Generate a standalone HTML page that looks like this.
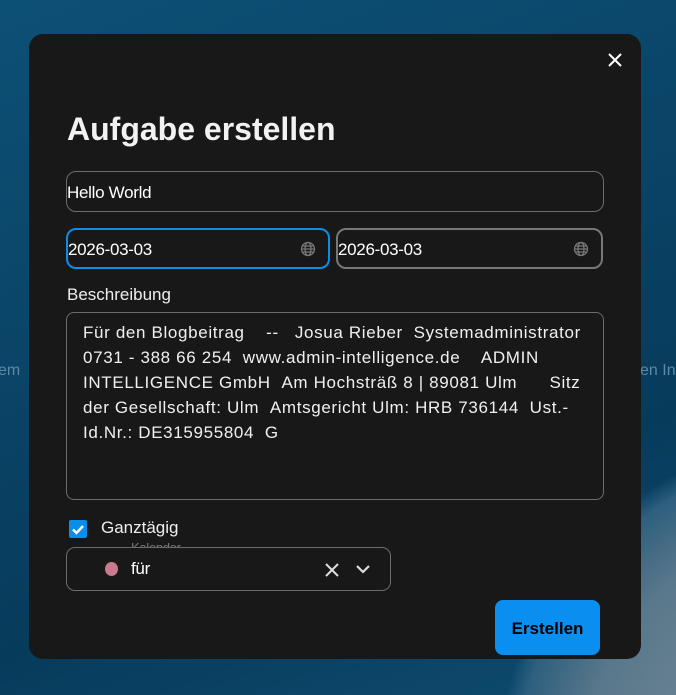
<!DOCTYPE html>
<html><head><meta charset="utf-8"><style>
*{box-sizing:border-box;margin:0;padding:0}
body{width:676px;height:695px;overflow:hidden;position:relative;font-family:"Segoe UI","Liberation Sans",sans-serif;
background:radial-gradient(circle at 820px 760px,#7d909c 0,#5a788b 230px,#2d5f7e 300px,transparent 320px),linear-gradient(160deg,#0d5076 0%,#0a4467 40%,#073b5c 70%,#0e4c6f 100%);}
.bg{position:absolute;top:362px;color:#5d8aa5;font-size:16px}
.dlg{position:absolute;left:29px;top:34px;width:612px;height:625px;background:#181818;border-radius:14px;color:#fff}
.x{position:absolute;left:578px;top:18px}
h1{position:absolute;left:38px;top:77px;font-size:32px;font-weight:bold;color:#f2f2f2}
.in{position:absolute;border:1.5px solid #6c6c6c;border-radius:10px;color:#fff;font-size:17px;padding-left:0px;padding-top:3px;display:flex;align-items:center;letter-spacing:-0.3px}
.glob{position:absolute;right:12px;top:11px}
.lbl{position:absolute;left:38px;top:251px;font-size:17px;color:#eee}
.ta{position:absolute;left:37px;top:278px;width:538px;height:188px;border:1.5px solid #6c6c6c;border-radius:8px;padding:7px 16px;font-size:17px;line-height:25px;color:#f0f0f0;white-space:nowrap;letter-spacing:0.65px}
.cb{position:absolute;left:40px;top:486px;width:18px;height:18px;background:#0a8ee8;border-radius:2px}
.btn{position:absolute;left:466px;top:566px;width:105px;height:55px;background:#0a8ff0;border-radius:8px;color:#000;font-weight:bold;font-size:17px;display:flex;align-items:center;justify-content:center;padding-top:2px}
</style></head><body>
<div class="bg" style="left:-2px">em</div><div class="bg" style="left:640px">en In</div>
<div class="dlg">
<svg class="x" width="16" height="16" viewBox="0 0 16 16"><path d="M2 2L14 14M14 2L2 14" stroke="#fff" stroke-width="2"/></svg>
<h1>Aufgabe erstellen</h1>
<div class="in" style="left:37px;top:137px;width:538px;height:41px">Hello World</div>
<div class="in" style="left:37px;top:194px;width:264px;height:41px;border:2px solid #0a8ee8">2026-03-03<svg class="glob" width="16" height="16" viewBox="0 0 16 16" fill="none" stroke="#777" stroke-width="1.3"><circle cx="8" cy="8" r="6.5"/><ellipse cx="8" cy="8" rx="3" ry="6.5"/><path d="M1.5 8h13M2.5 5h11M2.5 11h11"/></svg></div>
<div class="in" style="left:307px;top:194px;width:267px;height:41px;border:2px solid #777">2026-03-03<svg class="glob" width="16" height="16" viewBox="0 0 16 16" fill="none" stroke="#777" stroke-width="1.3"><circle cx="8" cy="8" r="6.5"/><ellipse cx="8" cy="8" rx="3" ry="6.5"/><path d="M1.5 8h13M2.5 5h11M2.5 11h11"/></svg></div>
<div class="lbl">Beschreibung</div>
<div class="ta">Für den Blogbeitrag &nbsp;&nbsp; -- &nbsp; Josua Rieber &nbsp;Systemadministrator<br>0731 - 388 66 254 &nbsp;www.admin-intelligence.de &nbsp;&nbsp; ADMIN<br>INTELLIGENCE GmbH &nbsp;Am Hochsträß 8 | 89081 Ulm &nbsp;&nbsp;&nbsp;&nbsp; Sitz<br>der Gesellschaft: Ulm &nbsp;Amtsgericht Ulm: HRB 736144 &nbsp;Ust.-<br>Id.Nr.: DE315955804 &nbsp;G</div>
<div class="cb"><svg width="18" height="18" viewBox="0 0 18 18"><path d="M4 9.5l3.5 3.5L14 6" stroke="#fff" stroke-width="2.4" fill="none"/></svg></div>
<div style="position:absolute;left:72px;top:484px;font-size:17px;color:#eee">Ganztägig</div>
<div class="in" style="left:37px;top:513px;width:325px;height:44px;border-radius:9px">
<div style="position:absolute;left:38px;top:14px;width:13px;height:14px;border-radius:50%;background:#c97a8c"></div>
<div style="position:absolute;left:64px;top:11px">für</div>
<div style="position:absolute;left:64px;top:-5px;font-size:13px;color:#777;height:4px;overflow:hidden;line-height:10px">Kalender</div>
<svg style="position:absolute;left:257px;top:14px" width="16" height="16" viewBox="0 0 16 16"><path d="M2 2L14 14M14 2L2 14" stroke="#ddd" stroke-width="2"/></svg>
<svg style="position:absolute;left:288px;top:15px" width="16" height="12" viewBox="0 0 16 12"><path d="M2 3l6 6 6-6" stroke="#ddd" stroke-width="2.2" fill="none"/></svg>
</div>
<div class="btn">Erstellen</div>
</div>
</body></html>
